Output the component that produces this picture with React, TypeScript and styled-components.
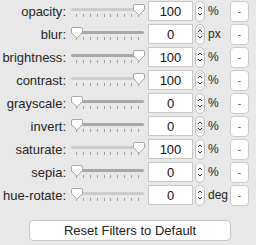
import styled, { createGlobalStyle } from "styled-components";

const GlobalStyle = createGlobalStyle`
  html, body {
    margin: 0;
    padding: 0;
    background: #e8e8e8;
    font-family: "Liberation Sans", Arial, sans-serif;
    font-size: 13px;
    color: #222;
  }
`;

const Panel = styled.div`
  width: 256px;
  height: 245px;
  box-sizing: border-box;
  padding: 1px 0 0 0;
  display: flex;
  flex-direction: column;
`;

const Rows = styled.div`
  display: grid;
  grid-template-columns: 69px 79px 45px 13px 24px 19px;
  grid-auto-rows: 20px;
  row-gap: 3px;
  align-items: center;
`;

const Label = styled.div`
  text-align: right;
  padding-right: 3px;
  white-space: nowrap;
  color: #262626;
`;

const SliderBox = styled.div`
  position: relative;
  height: 20px;
  margin-left: 2px;
  margin-right: 4px;
`;

const Track = styled.div<{ $light: boolean }>`
  position: absolute;
  left: 0;
  right: 0;
  top: 7px;
  height: 3px;
  border-radius: 2px;
  background: ${(p) => (p.$light ? "#cdcdcd" : "#a9a9a9")};
`;

const Ticks = styled.div`
  position: absolute;
  left: 5px;
  right: 5px;
  top: 13px;
  height: 3px;
  display: flex;
  justify-content: space-between;
`;

const Tick = styled.span`
  width: 1px;
  height: 3px;
  background: #a0a0a0;
`;

const Thumb = styled.svg<{ $atEnd: boolean }>`
  position: absolute;
  top: 3px;
  ${(p) => (p.$atEnd ? "right: -1px;" : "left: 0px;")}
`;

const NumberBox = styled.div`
  height: 20px;
  box-sizing: border-box;
  background: #fff;
  border: 1px solid #c8c8c8;
  display: flex;
  align-items: center;
  justify-content: center;
  font-size: 13px;
  color: #111;
`;

const Stepper = styled.div`
  width: 10px;
  height: 21px;
  margin-left: 2px;
  box-sizing: border-box;
  border: 1px solid #c4c4c4;
  border-radius: 5px;
  background: #f6f6f6;
  display: flex;
  align-items: center;
  justify-content: center;
`;

const Unit = styled.div`
  font-size: 12px;
  padding-left: 2px;
  color: #262626;
  white-space: nowrap;
`;

const DashButton = styled.button`
  width: 19px;
  height: 21px;
  padding: 0;
  box-sizing: border-box;
  border: 1px solid #cacaca;
  border-radius: 4px;
  background: #fff;
  font-family: inherit;
  font-size: 10px;
  color: #555;
  display: flex;
  align-items: center;
  justify-content: center;
`;

const ResetButton = styled.button`
  margin: 15px 0 0 29px;
  width: 202px;
  height: 21px;
  box-sizing: border-box;
  border: 1px solid #c6c6c6;
  border-radius: 4px;
  background: #fff;
  font-family: inherit;
  font-size: 13px;
  color: #222;
  padding: 0;
`;

interface FilterRow {
  name: string;
  value: number;
  unit: string;
  full: boolean;
  light: boolean;
}

const rows: FilterRow[] = [
  { name: "opacity", value: 100, unit: "%", full: true, light: true },
  { name: "blur", value: 0, unit: "px", full: false, light: false },
  { name: "brightness", value: 100, unit: "%", full: true, light: false },
  { name: "contrast", value: 100, unit: "%", full: true, light: true },
  { name: "grayscale", value: 0, unit: "%", full: false, light: false },
  { name: "invert", value: 0, unit: "%", full: false, light: false },
  { name: "saturate", value: 100, unit: "%", full: true, light: true },
  { name: "sepia", value: 0, unit: "%", full: false, light: false },
  { name: "hue-rotate", value: 0, unit: "deg", full: false, light: true },
];

function Slider({ full, light }: { full: boolean; light: boolean }) {
  return (
    <SliderBox>
      <Track $light={light} />
      <Ticks>
        {Array.from({ length: 10 }).map((_, i) => (
          <Tick key={i} />
        ))}
      </Ticks>
      <Thumb $atEnd={full} width="12" height="12" viewBox="0 0 12 12">
        <path
          d="M2 0.5 H10 A1.5 1.5 0 0 1 11.5 2 V5.5 L6 11.2 L0.5 5.5 V2 A1.5 1.5 0 0 1 2 0.5 Z"
          fill="#fff"
          stroke="#a8a8a8"
          strokeWidth="1"
        />
      </Thumb>
    </SliderBox>
  );
}

function StepperArrows() {
  return (
    <Stepper>
      <svg width="6" height="14" viewBox="0 0 6 14">
        <path d="M1 5 L3 3 L5 5" fill="none" stroke="#333" strokeWidth="1" />
        <path d="M1 9 L3 11 L5 9" fill="none" stroke="#333" strokeWidth="1" />
      </svg>
    </Stepper>
  );
}

export default function App() {
  return (
    <>
      <GlobalStyle />
      <Panel>
        <Rows>
          {rows.map((r) => (
            <>
              <Label key={r.name + "l"}>{r.name}:</Label>
              <Slider key={r.name + "s"} full={r.full} light={r.light} />
              <NumberBox key={r.name + "n"}>{r.value}</NumberBox>
              <StepperArrows key={r.name + "a"} />
              <Unit key={r.name + "u"}>{r.unit}</Unit>
              <DashButton key={r.name + "b"}>-</DashButton>
            </>
          ))}
        </Rows>
        <ResetButton>Reset Filters to Default</ResetButton>
      </Panel>
    </>
  );
}
